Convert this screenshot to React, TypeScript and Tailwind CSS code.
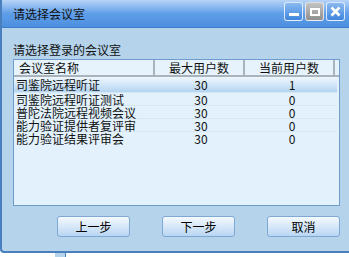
import React from 'react'

const rows = [
  { name: '司鉴院远程听证', max: 30, cur: 1 },
  { name: '司鉴院远程听证测试', max: 30, cur: 0 },
  { name: '普陀法院远程视频会议', max: 30, cur: 0 },
  { name: '能力验证提供者复评审', max: 30, cur: 0 },
  { name: '能力验证结果评审会', max: 30, cur: 0 },
]

const font = { fontFamily: '"Noto Sans CJK SC", "Liberation Sans", sans-serif' }

const Btn = ({ label }: { label: string }) => (
  <button className="w-[73px] h-[21px] rounded-[3px] border border-[#7fa8d4] bg-gradient-to-b from-[#f4f9fe] to-[#b9d6f2] text-[12px] text-black leading-none">
    {label}
  </button>
)

export default function App() {
  return (
    <div className="w-[349px] h-[257px] overflow-hidden bg-white text-[12px]" style={font}>
      <div className="w-[360px] h-[253px] flex flex-col border-l-2 border-b-2 border-[#4a7fbd] rounded-bl-[4px] bg-[#b5d3eb]">
        {/* title bar */}
        <div className="h-[28px] flex items-center bg-gradient-to-b from-[#b7d4f6] via-[#5f9ee8] to-[#4d8fe0] border-b border-[#3f7dc9] pl-[11px] pr-[13px]">
          <span className="text-[#111] text-[12px]">请选择会议室</span>
          <div className="ml-auto flex gap-[2px] mt-[-4px] pr-[2px]">
            <div className="w-[19px] h-[19px] rounded-[3px] border border-white/80 bg-gradient-to-b from-[#8ab9f0] to-[#3f86de] flex items-end justify-center pb-[4px]">
              <div className="w-[10px] h-[3px] bg-white" />
            </div>
            <div className="w-[19px] h-[19px] rounded-[3px] border border-white/70 bg-gradient-to-b from-[#c4c4c4] to-[#8f8f8f] flex items-center justify-center">
              <div className="w-[10px] h-[8px] border-2 border-white" />
            </div>
            <div className="w-[19px] h-[19px] rounded-[3px] border border-white/80 bg-gradient-to-b from-[#8ab9f0] to-[#3f86de] flex items-center justify-center">
              <svg width="11" height="11" viewBox="0 0 11 11">
                <path d="M1.5 1.5 L9.5 9.5 M9.5 1.5 L1.5 9.5" stroke="white" strokeWidth="2.6" />
              </svg>
            </div>
          </div>
        </div>

        {/* body */}
        <div className="flex-1 flex flex-col pl-[11px]">
          <div className="mt-[14px] h-[16px] leading-[16px] text-[#111]">请选择登录的会议室</div>
          <div className="mt-[1px] w-[327px] h-[147px] border border-[#6e9dcc] bg-[#e2f1fc]">
            <div className="flex h-[17px] border-b-2 border-[#a9b3bc] bg-[#e6f3fc] text-[#111]">
              <div className="w-[141px] pl-[5px] leading-[16px] border-r-2 border-[#a9b3bc]">会议室名称</div>
              <div className="w-[90px] text-center leading-[16px] border-r-2 border-[#a9b3bc]">最大用户数</div>
              <div className="w-[90px] text-center leading-[16px] border-r-2 border-[#a9b3bc]">当前用户数</div>
            </div>
            {rows.map((r, i) => (
              <div
                key={r.name}
                className={`flex w-[323px] h-[13px] leading-[13px] text-[#111] ${
                  i === 0 ? 'bg-gradient-to-b from-[#eef6fd] via-[#d3e7f8] to-[#b4d4f0] h-[15px] leading-[15px]' : 'border-t border-[#d4e6f4]'
                }`}
              >
                <div className="w-[141px] pl-[2px] whitespace-nowrap">{r.name}</div>
                <div className="w-[92px] text-center">{r.max}</div>
                <div className="w-[90px] text-center">{r.cur}</div>
              </div>
            ))}
          </div>
          <div className="mt-[10px] flex gap-[32px] pl-[44px]">
            <Btn label="上一步" />
            <Btn label="下一步" />
            <Btn label="取消" />
          </div>
        </div>
      </div>
      <div className="flex h-[4px]">
        <div className="ml-[55px] w-[10px] bg-[#b5d3eb]" />
        <div className="w-[1px] bg-[#4a7fbd]" />
      </div>
    </div>
  )
}
